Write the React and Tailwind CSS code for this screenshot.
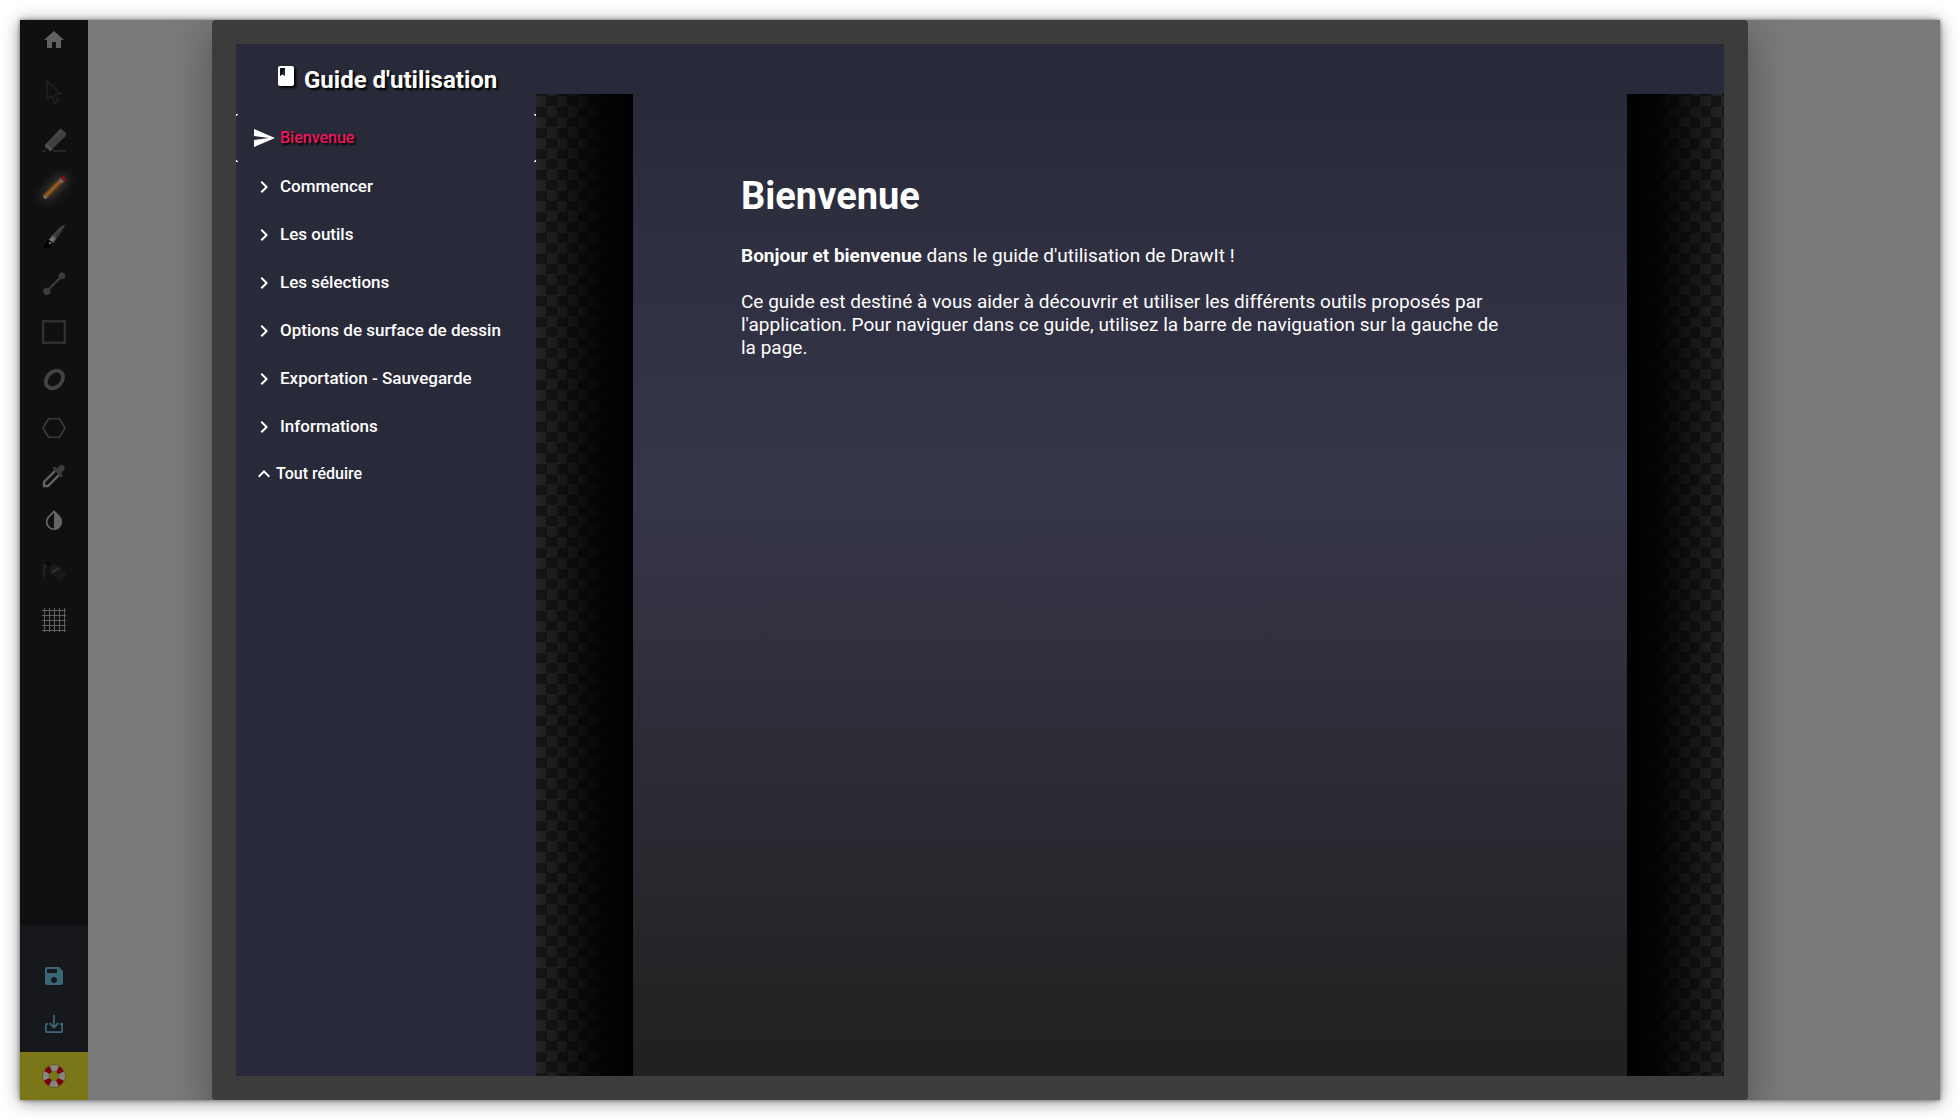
import React from "react";
import {
  MdChevronRight,
  MdClass,
  MdExpandLess,
  MdHome,
  MdSave,
  MdSend,
} from "react-icons/md";

const CursorIcon = () => (
  <svg viewBox="0 0 24 24" className="size-6" fill="none" stroke="#1e1e1e" strokeWidth="1.8" strokeLinejoin="round">
    <path d="M5 1v18l4.400-3.600 3 7.400 3.800-1.500-3.100-7.300h5.900z" />
  </svg>
);

const EraserIcon = () => (
  <svg viewBox="0 0 24 24" className="size-6">
    <path d="M3 17 18.500 0.500 24 5 23 8 8.500 23z" fill="#484848" />
    <path d="M5 17.500 20 3l4 3-1 2.500L8.500 22z" fill="#404040" />
    <path d="M3 17.500 4.500 16l6 5L8.500 23.500 3 19z" fill="#585858" />
    <path d="m3.800 18 4.700 4.500" stroke="#353535" strokeWidth=".8" />
    <path d="M0 23h4M11 23h13" stroke="#252628" strokeWidth="2" />
  </svg>
);

const PencilIcon = () => (
  <svg viewBox="0 0 24 24" className="size-6 overflow-visible drop-shadow-[0_0_6px_rgba(190,180,165,0.6)]">
    <path d="M2 18.500 17 3.500l3.500 3.500L5.500 22z" fill="#84501d" />
    <path d="m3.300 19.300 15-15 1.200 1.200-15 15z" fill="#935c26" />
    <path d="m4.700 21.200 15-15 .8.800L5.500 22z" fill="#5f3510" />
    <path d="m16.500 4 2.500-2.500 3.500 3.500L20 7.500z" fill="#6a6a6a" />
    <path d="M18 1.500c1.500-2.500 6.500-1.500 6 2.500 0 1-.5 1.500-1.500 2z" fill="#7d1118" />
    <path d="m2 18.500 3.500 3.500L0 24z" fill="#857b6b" />
    <path d="m0 24 1-3 2 2z" fill="#090909" />
  </svg>
);

const BrushIcon = () => (
  <svg viewBox="0 0 24 24" className="size-6">
    <path d="M23 0C18 3 12 8 10 12l4 3c4-4 8-10 9-15z" fill="#343434" />
    <path d="M22 2c-5 4-8 7-9 11M20 3l-8 9" stroke="#4c4c4c" strokeWidth="1" fill="none" />
    <path d="m10.500 11 4 3.500-3.500 5L6.500 16z" fill="#5c5c5c" />
    <path d="m10 13 2 2-2.500 4L7 17z" fill="#777" />
    <path d="M6.500 16c2 .5 4 1.500 4.500 3.500-1.500 4-6 4.500-10 4.500 2-1.500 1.500-6 5.500-8z" fill="#020202" />
    <circle cx="8" cy="19" r="1.300" fill="#666" />
  </svg>
);

const LineIcon = () => (
  <svg viewBox="0 0 24 24" className="size-6" stroke="#3b3b3b" fill="#3b3b3b">
    <path d="M4.500 19.500 20 4" strokeWidth="2.400" />
    <circle cx="4.800" cy="19.300" r="3.300" />
    <circle cx="20" cy="3.800" r="3" />
  </svg>
);

const RectangleIcon = () => (
  <svg viewBox="0 0 24 24" className="size-6" fill="none" stroke="#303030" strokeWidth="2.400">
    <path d="M1.200 1.200h21.600v21.600H1.200z" />
  </svg>
);

const EllipseIcon = () => (
  <svg viewBox="0 0 24 24" className="size-6" fill="none" stroke="#434343" strokeWidth="3.800">
    <ellipse cx="12.400" cy="11.500" rx="7.500" ry="9.800" transform="rotate(42 12.400 11.500)" />
  </svg>
);

const HexagonIcon = () => (
  <svg viewBox="0 0 24 24" className="size-6" fill="none" stroke="#3b3b3b" strokeWidth="1.600">
    <path d="M6.500 2.800h11L23 12l-5.500 9.200h-11L1 12z" />
  </svg>
);

const DropperIcon = () => (
  <svg viewBox="0 0 24 24" className="size-6">
    <path d="M13 7 2 18v4h4L17 11" fill="none" stroke="#646464" strokeWidth="2.400" />
    <path d="m10.500 4 2-1.500 2.500 2 3-3c2-2.500 6.500 1.500 4 4.500l-3 3 2 2.500-2 2z" fill="#3c3c3c" />
  </svg>
);

const ContrastIcon = () => (
  <svg viewBox="0 0 24 24" className="size-6">
    <path d="M12 3.500 6.700 8.800a7.300 7.300 0 1 0 10.600 0z" fill="none" stroke="#656565" strokeWidth="1.800" />
    <path d="M12 2.500 17.500 8a8 8 0 0 1-5.500 13.500z" fill="#656565" />
  </svg>
);

const SprayIcon = () => (
  <svg viewBox="0 0 24 24" className="size-6">
    <path d="M1 4h4v3l-2 3v4l-2 5z" fill="#1c1c1c" />
    <path d="M1.500 5v15M3.500 5v10" stroke="#2e2e2e" strokeDasharray="1 1.500" />
    <path d="m8 6 5-3 10.500 10.500c1.500 3-3.500 8-6.500 6.500L7 12z" fill="#191919" />
    <path d="M4 4.500c2-3 4-2 5-1L7 6z" fill="#030303" />
    <path d="m9.500 13 7.500-5.500" stroke="#333" strokeWidth="2" />
  </svg>
);

const GridIcon = () => (
  <svg viewBox="0 0 24 24" className="size-6" stroke="#5f6061" strokeWidth="1">
    <path d="M2.500 0v24M7.500 0v24M12.500 0v24M17.500 0v24M22.500 0v24M0 2.500h24M0 7.500h24M0 12.500h24M0 17.500h24M0 22.500h24" />
  </svg>
);

const DownloadIcon = () => (
  <svg viewBox="0 0 24 24" className="size-6" fill="none" stroke="#3b6675" strokeWidth="1.800">
    <path d="M12 3v12M7.500 11l4.500 4.500 4.500-4.500M3.900 12v7.300c0 .5.300.8.800.8h14.600c.5 0 .8-.3.800-.8V12H18M6 12H3.900" />
  </svg>
);

const LifebuoyIcon = () => (
  <svg viewBox="0 0 24 24" className="size-6" fill="none">
    <circle cx="12" cy="12" r="11.400" stroke="#5d5716" strokeWidth="1" />
    <circle cx="12" cy="12" r="7.800" stroke="#858585" strokeWidth="6.400" />
    <circle cx="12" cy="12" r="7.800" stroke="#780006" strokeWidth="6.400" strokeDasharray="5.200 7.052" strokeDashoffset="-3.526" />
    <circle cx="12" cy="12" r="4.700" stroke="#625c1c" strokeWidth=".7" />
  </svg>
);

const tools = [
  { label: "Accueil", icon: <MdHome className="size-6 text-[#606160]" />, row: "h-10 mb-2" },
  { label: "Sélection", icon: <CursorIcon />, row: "h-12" },
  { label: "Efface", icon: <EraserIcon />, row: "h-12" },
  { label: "Crayon", icon: <PencilIcon />, row: "h-12" },
  { label: "Pinceau", icon: <BrushIcon />, row: "h-12" },
  { label: "Ligne", icon: <LineIcon />, row: "h-12" },
  { label: "Rectangle", icon: <RectangleIcon />, row: "h-12" },
  { label: "Ellipse", icon: <EllipseIcon />, row: "h-12" },
  { label: "Polygone", icon: <HexagonIcon />, row: "h-12" },
  { label: "Pipette", icon: <DropperIcon />, row: "h-12" },
  { label: "Couleur", icon: <ContrastIcon />, row: "h-10 mb-2" },
  { label: "Aérosol", icon: <SprayIcon />, row: "h-12" },
  { label: "Grille", icon: <GridIcon />, row: "h-12" },
];

const sections = [
  "Commencer",
  "Les outils",
  "Les sélections",
  "Options de surface de dessin",
  "Exportation - Sauvegarde",
  "Informations",
];

function ToolButton({ label, icon, row }) {
  return (
    <button type="button" aria-label={label} className={`flex w-full shrink-0 items-center justify-center ${row}`}>
      {icon}
    </button>
  );
}

function Toolbar() {
  return (
    <aside className="flex w-[68px] shrink-0 flex-col bg-[#0f1011]">
      {tools.map((tool) => (
        <ToolButton key={tool.label} {...tool} />
      ))}
      <div className="mt-auto bg-[#17181c] pt-[26px] pb-1">
        <ToolButton label="Sauvegarder" icon={<MdSave className="size-6 text-[#3b6675]" />} row="h-12" />
        <ToolButton label="Exporter" icon={<DownloadIcon />} row="h-12" />
      </div>
      <div className="bg-[#7b7618]">
        <ToolButton label="Guide" icon={<LifebuoyIcon />} row="h-12" />
      </div>
    </aside>
  );
}

function Corners() {
  return (
    <>
      <span className="absolute top-0 left-0 size-[2px] border-t border-l border-white" />
      <span className="absolute top-0 right-0 size-[2px] border-t border-r border-white" />
      <span className="absolute bottom-0 left-0 size-[2px] border-b border-l border-white" />
      <span className="absolute right-0 bottom-0 size-[2px] border-r border-b border-white" />
    </>
  );
}

function GuideNav() {
  return (
    <nav className="w-[300px] shrink-0 bg-[#292a39] pt-5 text-base font-medium">
      <button type="button" className="relative flex h-12 w-full items-center gap-1 pl-4 text-[#f0155c]">
        <Corners />
        <MdSend className="size-6 text-white" />
        <span className="[text-shadow:2px_2px_2px_#000]">Bienvenue</span>
      </button>
      {sections.map((section) => (
        <button key={section} type="button" className="flex h-12 w-full items-center gap-1 pt-0.5 pl-4 text-[17px]">
          <MdChevronRight className="size-6" />
          {section}
        </button>
      ))}
      <button type="button" className="flex h-12 w-full items-center pl-4">
        <MdExpandLess className="size-6" />
        Tout réduire
      </button>
    </nav>
  );
}

const checker = "w-[97px] shrink-0 bg-[length:100%_100%,21px_21px] bg-[position:0_0,0_2px]";

function GuideContent() {
  return (
    <div className="flex min-w-0 flex-1">
      <div className={`${checker} bg-[image:linear-gradient(to_right,transparent,rgba(0,0,0,0.88)_70%,#000),repeating-conic-gradient(#161616_0_25%,#242424_0_50%)]`} />
      <article className="min-w-0 flex-1 bg-linear-[180deg,#292a39_0%,#36364a_40%,#212121_98%] pt-[78px] pr-[120px] pl-[108px] text-[19px] leading-[23px]">
        <h1 className="mb-6 text-[38px] leading-[48px] font-bold">Bienvenue</h1>
        <p className="mb-[23px]">
          <strong className="font-bold">Bonjour et bienvenue</strong> dans le guide d'utilisation de DrawIt !
        </p>
        <p>
          Ce guide est destiné à vous aider à découvrir et utiliser les différents outils proposés par l'application.
          Pour naviguer dans ce guide, utilisez la barre de naviguation sur la gauche de la page.
        </p>
      </article>
      <div className={`${checker} bg-[image:linear-gradient(to_left,transparent,rgba(0,0,0,0.88)_70%,#000),repeating-conic-gradient(#242424_0_25%,#161616_0_50%)]`} />
    </div>
  );
}

export default function App() {
  return (
    <div className="flex h-screen bg-white p-5 font-['Roboto',sans-serif] text-white">
      <div className="flex min-w-0 flex-1 shadow-[0_0_4px_rgba(0,0,0,0.5),0_2px_16px_rgba(0,0,0,0.45)]">
        <div className="flex min-w-0 flex-1 overflow-hidden bg-[#7a7a7a]">
          <Toolbar />
          <main className="mr-48 ml-[124px] flex min-w-0 flex-1 flex-col rounded-sm bg-[#3c3c3c] p-6 shadow-[0_11px_15px_-7px_rgba(0,0,0,0.2),0_24px_38px_3px_rgba(0,0,0,0.14),0_9px_46px_8px_rgba(0,0,0,0.12)]">
            <header className="flex h-[50px] shrink-0 items-center bg-[#292a39] pt-[18px] pl-[38px]">
              <MdClass className="mb-1 size-6 drop-shadow-[2px_2px_1px_#000]" />
              <h2 className="pt-1 pl-1.5 text-2xl font-bold [text-shadow:2px_2px_2px_#000]">Guide d'utilisation</h2>
            </header>
            <div className="flex min-h-0 flex-1">
              <GuideNav />
              <GuideContent />
            </div>
          </main>
        </div>
      </div>
    </div>
  );
}
